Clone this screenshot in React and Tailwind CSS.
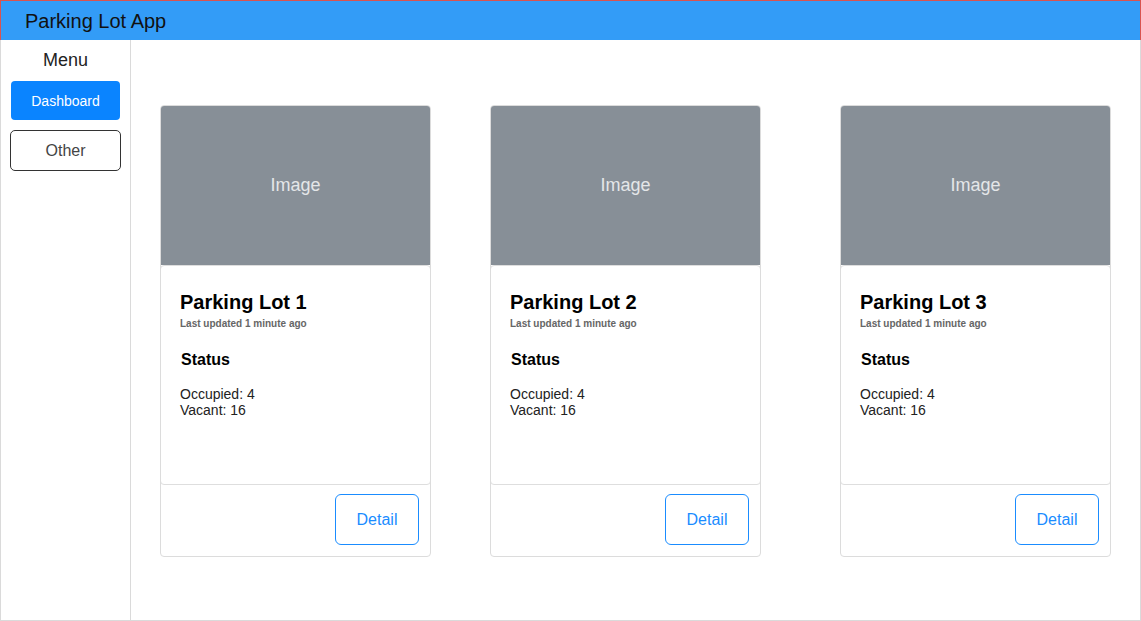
export default function App() {
  const lots = [1, 2, 3];
  const gaps = ["ml-[29px]", "ml-[59px]", "ml-[79px]"];
  return (
    <div className="w-[1141px] h-[621px] bg-white flex flex-col border-x border-b border-[#dadada]" style={{ fontFamily: '"Liberation Sans", Arial, sans-serif' }}>
      <div className="h-[40px] shrink-0 bg-[#339cf7] border-t border-x border-[#d9534f] -mx-px flex items-center pl-[24px]">
        <span className="text-[20px] text-[#111] leading-none">Parking Lot App</span>
      </div>
      <div className="flex flex-1">
        <div className="w-[130px] shrink-0 border-r border-[#dadada] flex flex-col items-center">
          <div className="mt-[10px] text-[18px] leading-[20px] text-[#222]">Menu</div>
          <button className="mt-[11px] w-[109px] h-[39px] pt-[2px] rounded-[4px] bg-[#0a84ff] text-white text-[14px]">Dashboard</button>
          <button className="mt-[10px] w-[111px] h-[41px] rounded-[5px] border border-[#333] text-[#444] text-[16px] bg-white">Other</button>
        </div>
        <div className="flex items-start pt-[65px]">
          {lots.map((n, i) => (
            <div key={n} className={`${gaps[i]} w-[271px] border border-[#dcdcdc] rounded-[4px] overflow-hidden flex flex-col`}>
              <div className="h-[159px] bg-[#878f97] flex items-center justify-center text-[18px] text-[#e4e6e8]">Image</div>
              <div className="h-[220px] border border-[#dedede] rounded-[4px] -mx-px pl-[19px] pt-[24px]">
                <div className="text-[20px] font-bold leading-[24px] text-black">Parking Lot {n}</div>
                <div className="text-[10px] font-bold leading-[12px] text-[#666] mt-[4px]">Last updated 1 minute ago</div>
                <div className="text-[16px] font-bold leading-[20px] text-black mt-[20px] ml-px">Status</div>
                <div className="text-[14px] leading-[16px] text-[#222] mt-[16px]">Occupied: 4</div>
                <div className="text-[14px] leading-[16px] text-[#222]">Vacant: 16</div>
              </div>
              <div className="h-[71px] flex justify-end items-start pt-[9px] pr-[11px]">
                <button className="w-[84px] h-[51px] rounded-[6px] border border-[#1a8cff] text-[#1a8cff] text-[16px] bg-white">Detail</button>
              </div>
            </div>
          ))}
        </div>
      </div>
    </div>
  );
}
